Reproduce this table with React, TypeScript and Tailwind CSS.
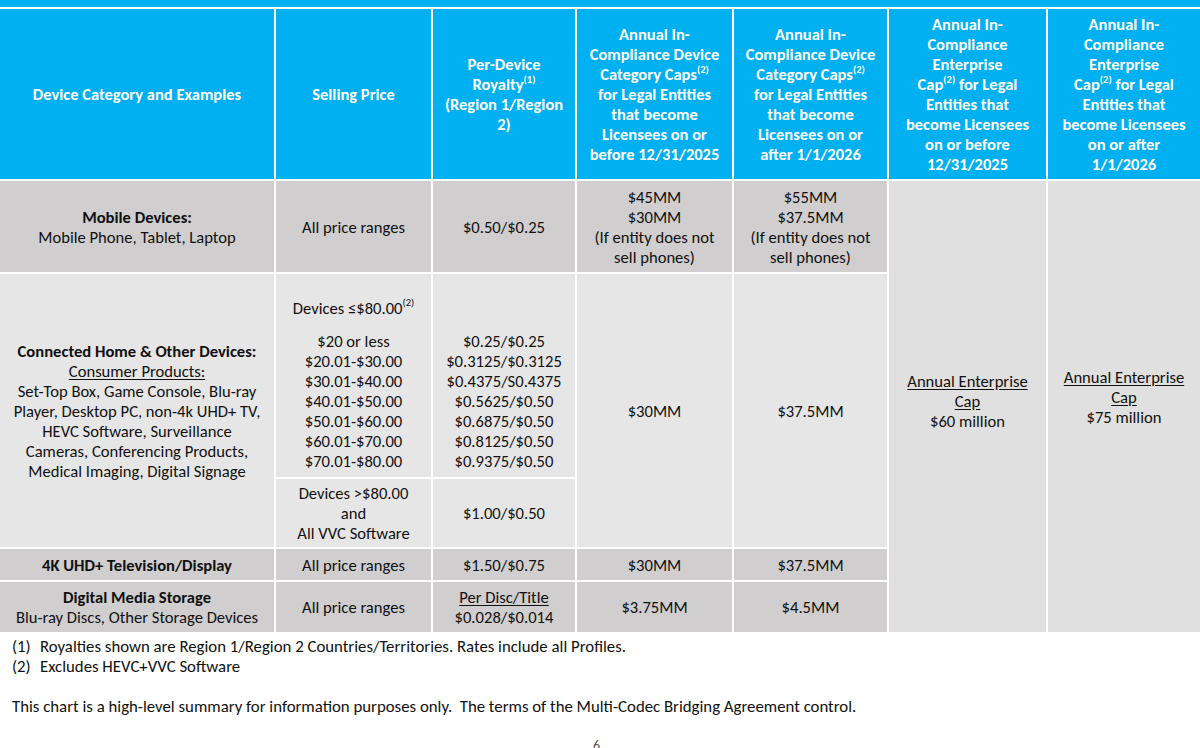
import React from "react";

const H = "flex flex-col items-center justify-center text-center bg-[#00b0f0] text-white font-bold text-[16.5px] leading-[20px] px-1";
const D = "flex flex-col items-center justify-center text-center bg-[#d0cece] text-[#111] text-[16.6px] leading-[20px] px-1";
const L = "flex flex-col items-center justify-center text-center bg-[#e7e6e6] text-[#111] text-[16.6px] leading-[20px] px-1";
const E = "flex flex-col items-center justify-center text-center bg-[#e0e0e0] text-[#111] text-[16.6px] leading-[20px] px-1";

function Sup({ children }: { children: React.ReactNode }) {
  return <sup className="text-[10.5px] align-super leading-none relative -top-[1px]">{children}</sup>;
}

export default function App() {
  return (
    <div
      className="w-[1200px] h-[748px] bg-white overflow-hidden relative"
      style={{ fontFamily: "Carlito, Lato, 'Liberation Sans', sans-serif" }}
    >
      <div className="h-[7px] bg-[#00b0f0]" />
      <div className="mt-[2px] grid gap-[2px] grid-cols-[274px_155px_142px_155px_153px_157px_152px] grid-rows-[170px_91px_203px_68px_31px_50px]">
        {/* Header */}
        <div className={`${H} col-start-1 row-start-1`}>Device Category and Examples</div>
        <div className={`${H} col-start-2 row-start-1`}>Selling Price</div>
        <div className={`${H} col-start-3 row-start-1`}>
          <span>Per-Device</span>
          <span>Royalty<Sup>(1)</Sup></span>
          <span>(Region 1/Region</span>
          <span>2)</span>
        </div>
        <div className={`${H} col-start-4 row-start-1`}>
          <span>Annual In-</span>
          <span>Compliance Device</span>
          <span>Category Caps<Sup>(2)</Sup></span>
          <span>for Legal Entities</span>
          <span>that become</span>
          <span>Licensees on or</span>
          <span>before 12/31/2025</span>
        </div>
        <div className={`${H} col-start-5 row-start-1`}>
          <span>Annual In-</span>
          <span>Compliance Device</span>
          <span>Category Caps<Sup>(2)</Sup></span>
          <span>for Legal Entities</span>
          <span>that become</span>
          <span>Licensees on or</span>
          <span>after 1/1/2026</span>
        </div>
        <div className={`${H} col-start-6 row-start-1`}>
          <span>Annual In-</span>
          <span>Compliance</span>
          <span>Enterprise</span>
          <span>Cap<Sup>(2)</Sup> for Legal</span>
          <span>Entities that</span>
          <span>become Licensees</span>
          <span>on or before</span>
          <span>12/31/2025</span>
        </div>
        <div className={`${H} col-start-7 row-start-1`}>
          <span>Annual In-</span>
          <span>Compliance</span>
          <span>Enterprise</span>
          <span>Cap<Sup>(2)</Sup> for Legal</span>
          <span>Entities that</span>
          <span>become Licensees</span>
          <span>on or after</span>
          <span>1/1/2026</span>
        </div>

        {/* Mobile */}
        <div className={`${D} col-start-1 row-start-2`}>
          <span className="font-bold">Mobile Devices:</span>
          <span>Mobile Phone, Tablet, Laptop</span>
        </div>
        <div className={`${D} col-start-2 row-start-2`}>All price ranges</div>
        <div className={`${D} col-start-3 row-start-2`}>$0.50/$0.25</div>
        <div className={`${D} col-start-4 row-start-2`}>
          <span>$45MM</span>
          <span>$30MM</span>
          <span>(If entity does not</span>
          <span>sell phones)</span>
        </div>
        <div className={`${D} col-start-5 row-start-2`}>
          <span>$55MM</span>
          <span>$37.5MM</span>
          <span>(If entity does not</span>
          <span>sell phones)</span>
        </div>

        {/* Enterprise caps */}
        <div className={`${E} col-start-6 row-start-2 row-span-5 pb-[11px]`}>
          <span className="underline underline-offset-2">Annual Enterprise</span>
          <span className="underline underline-offset-2">Cap</span>
          <span>$60 million</span>
        </div>
        <div className={`${E} col-start-7 row-start-2 row-span-5 pb-[19px]`}>
          <span className="underline underline-offset-2">Annual Enterprise</span>
          <span className="underline underline-offset-2">Cap</span>
          <span>$75 million</span>
        </div>

        {/* Connected home */}
        <div className={`${L} col-start-1 row-start-3 row-span-2`}>
          <span className="font-bold">Connected Home &amp; Other Devices:</span>
          <span className="underline underline-offset-2">Consumer Products:</span>
          <span>Set-Top Box, Game Console, Blu-ray</span>
          <span>Player, Desktop PC, non-4k UHD+ TV,</span>
          <span>HEVC Software, Surveillance</span>
          <span>Cameras, Conferencing Products,</span>
          <span>Medical Imaging, Digital Signage</span>
        </div>
        <div className={`${L} col-start-2 row-start-3 !justify-end pb-[6px]`}>
          <span className="mb-[13px]">Devices ≤$80.00<Sup>(2)</Sup></span>
          <span>$20 or less</span>
          <span>$20.01-$30.00</span>
          <span>$30.01-$40.00</span>
          <span>$40.01-$50.00</span>
          <span>$50.01-$60.00</span>
          <span>$60.01-$70.00</span>
          <span>$70.01-$80.00</span>
        </div>
        <div className={`${L} col-start-3 row-start-3 !justify-end pb-[6px]`}>
          <span>$0.25/$0.25</span>
          <span>$0.3125/$0.3125</span>
          <span>$0.4375/S0.4375</span>
          <span>$0.5625/$0.50</span>
          <span>$0.6875/$0.50</span>
          <span>$0.8125/$0.50</span>
          <span>$0.9375/$0.50</span>
        </div>
        <div className={`${L} col-start-2 row-start-4`}>
          <span>Devices &gt;$80.00</span>
          <span>and</span>
          <span>All VVC Software</span>
        </div>
        <div className={`${L} col-start-3 row-start-4`}>$1.00/$0.50</div>
        <div className={`${L} col-start-4 row-start-3 row-span-2`}>$30MM</div>
        <div className={`${L} col-start-5 row-start-3 row-span-2`}>$37.5MM</div>

        {/* 4K */}
        <div className={`${D} col-start-1 row-start-5 font-bold`}>4K UHD+ Television/Display</div>
        <div className={`${D} col-start-2 row-start-5`}>All price ranges</div>
        <div className={`${D} col-start-3 row-start-5`}>$1.50/$0.75</div>
        <div className={`${D} col-start-4 row-start-5`}>$30MM</div>
        <div className={`${D} col-start-5 row-start-5`}>$37.5MM</div>

        {/* Storage */}
        <div className={`${D} col-start-1 row-start-6`}>
          <span className="font-bold">Digital Media Storage</span>
          <span>Blu-ray Discs, Other Storage Devices</span>
        </div>
        <div className={`${D} col-start-2 row-start-6`}>All price ranges</div>
        <div className={`${D} col-start-3 row-start-6`}>
          <span className="underline underline-offset-2">Per Disc/Title</span>
          <span>$0.028/$0.014</span>
        </div>
        <div className={`${D} col-start-4 row-start-6`}>$3.75MM</div>
        <div className={`${D} col-start-5 row-start-6`}>$4.5MM</div>
      </div>

      {/* Footnotes */}
      <div className="mt-[5px] pl-[12px] text-[16.8px] leading-[20px] text-[#111]">
        <div className="flex">
          <span className="w-[28px] shrink-0">(1)</span>
          <span>Royalties shown are Region 1/Region 2 Countries/Territories. Rates include all Profiles.</span>
        </div>
        <div className="flex">
          <span className="w-[28px] shrink-0">(2)</span>
          <span>Excludes HEVC+VVC Software</span>
        </div>
        <div className="mt-[20px]">
          This chart is a high-level summary for information purposes only.&nbsp; The terms of the Multi-Codec Bridging Agreement control.
        </div>
      </div>
      <div className="absolute left-[593px] top-[736px] text-[14px] leading-[20px] text-[#555]">6</div>
    </div>
  );
}
